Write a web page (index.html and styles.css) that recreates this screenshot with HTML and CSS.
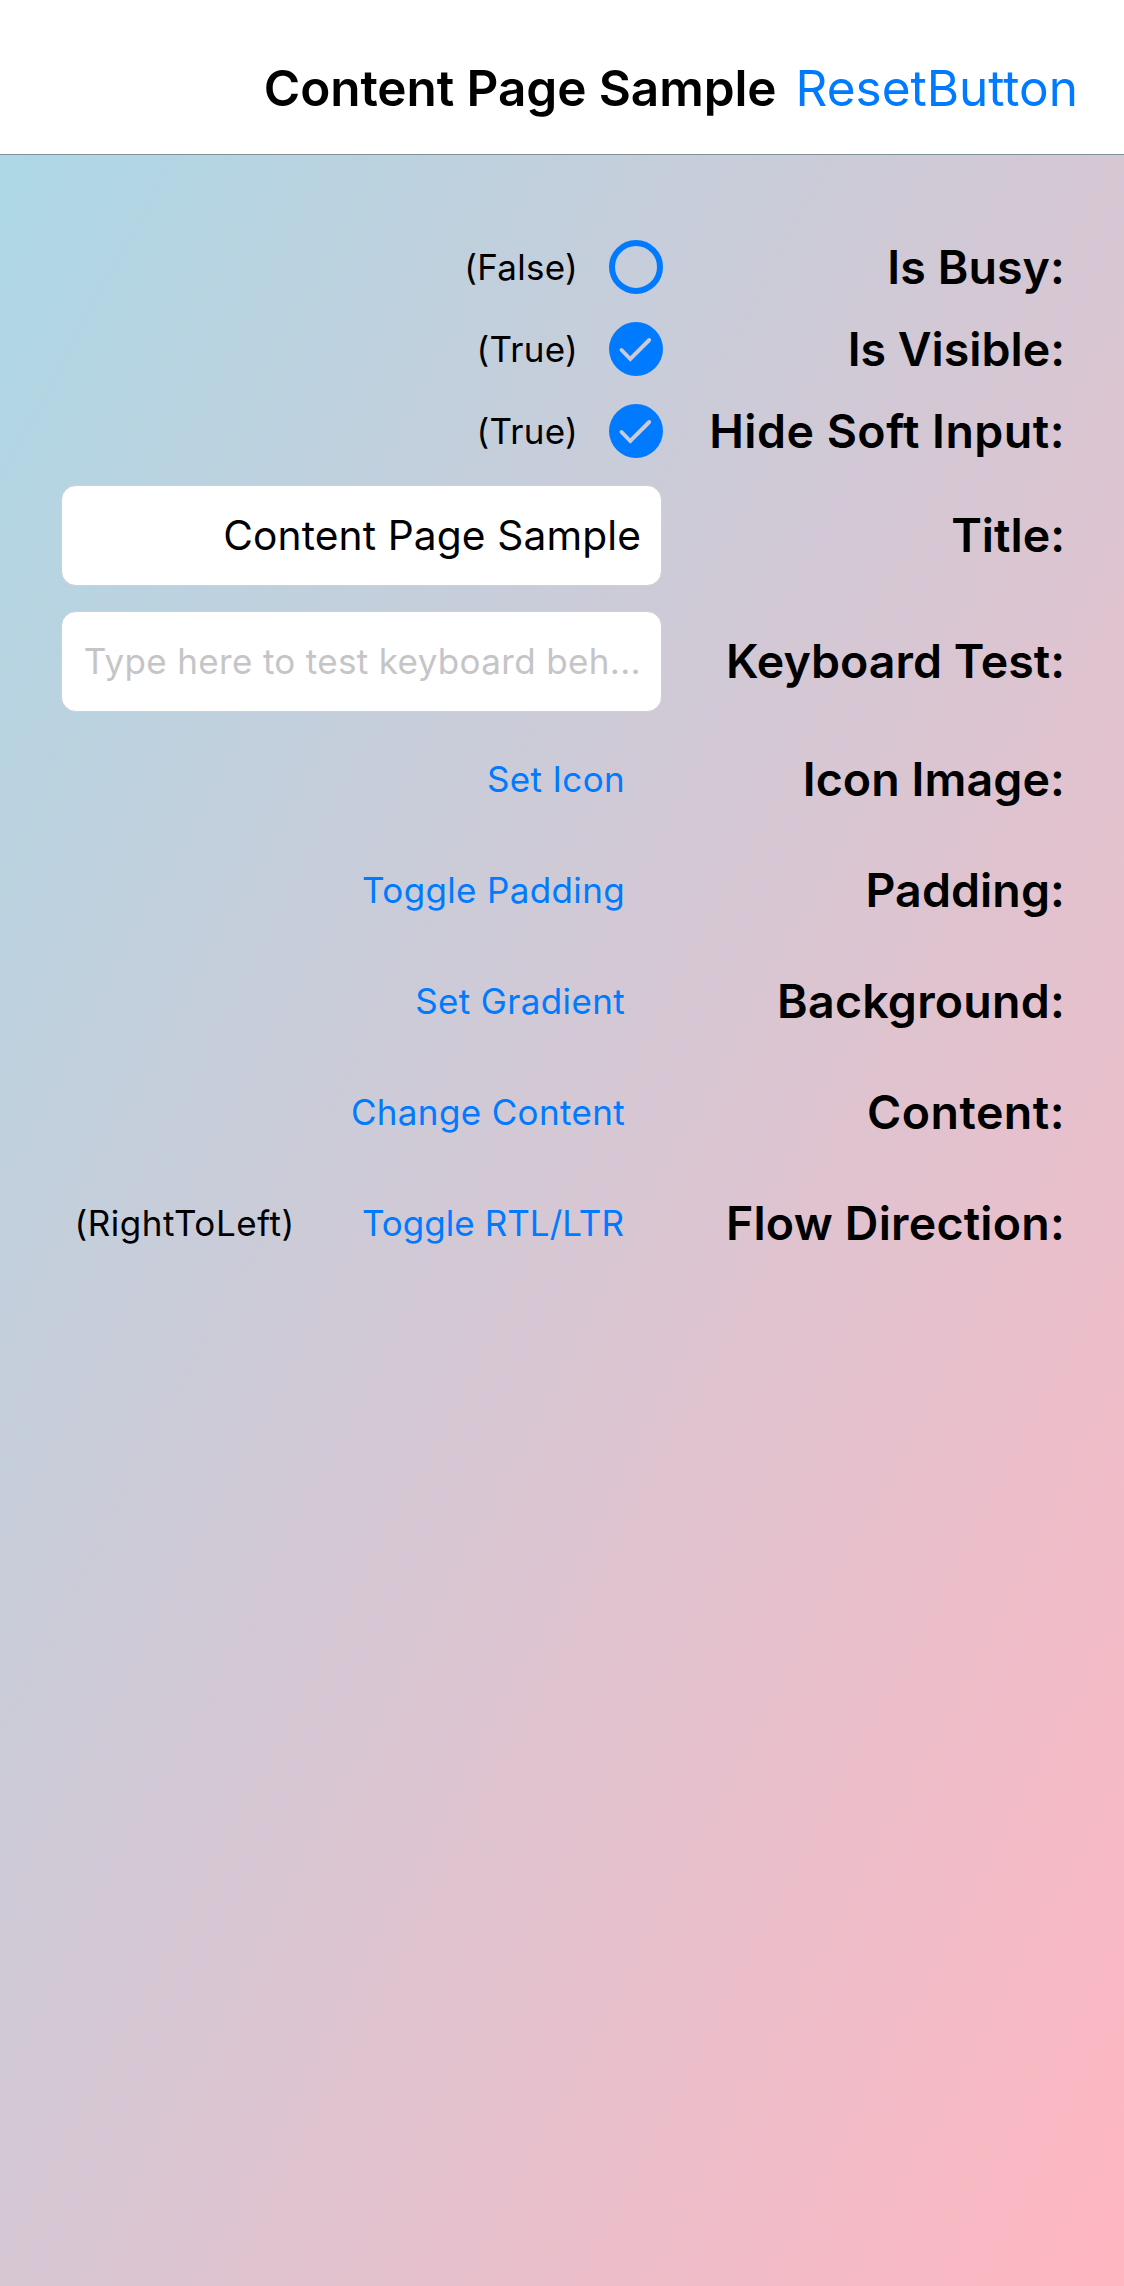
FILE: index.html
```
<!DOCTYPE html>
<html lang="en">
<head>
<meta charset="utf-8">
<title>Content Page Sample</title>
<link rel="stylesheet" href="styles.css">
</head>
<body>
<header class="navbar">
  <h1 class="navbar-title">Content Page Sample</h1>
  <a class="navbar-action">ResetButton</a>
</header>
<main class="page">
  <div class="row row-check">
    <div class="control"><span class="status">(False)</span>
      <svg class="check" viewBox="0 0 54 54"><circle cx="27" cy="27" r="24" fill="none" stroke="#007aff" stroke-width="6"/></svg></div>
    <span class="label">Is Busy:</span>
  </div>
  <div class="row row-check">
    <div class="control"><span class="status">(True)</span>
      <svg class="check" viewBox="0 0 54 54"><circle cx="27" cy="27" r="27" fill="#007aff"/><path d="M12.5 28 L21.3 37 L40.2 18" fill="none" stroke="#cacbd9" stroke-width="3.9" stroke-linecap="round" stroke-linejoin="miter"/></svg></div>
    <span class="label label-tight">Is Visible:</span>
  </div>
  <div class="row row-check">
    <div class="control"><span class="status">(True)</span>
      <svg class="check" viewBox="0 0 54 54"><circle cx="27" cy="27" r="27" fill="#007aff"/><path d="M12.5 28 L21.3 37 L40.2 18" fill="none" stroke="#cacbd9" stroke-width="3.9" stroke-linecap="round" stroke-linejoin="miter"/></svg></div>
    <span class="label label-wide">Hide Soft Input:</span>
  </div>
  <div class="row row-field">
    <div class="control field">Content Page Sample</div>
    <span class="label label-tight">Title:</span>
  </div>
  <div class="row row-field">
    <div class="control field placeholder">Type here to test keyboard beh...</div>
    <span class="label label-tight">Keyboard Test:</span>
  </div>
  <div class="row row-action">
    <div class="control actions"><a class="action">Set Icon</a></div>
    <span class="label">Icon Image:</span>
  </div>
  <div class="row row-action">
    <div class="control actions"><a class="action">Toggle Padding</a></div>
    <span class="label">Padding:</span>
  </div>
  <div class="row row-action">
    <div class="control actions"><a class="action">Set Gradient</a></div>
    <span class="label label-loose">Background:</span>
  </div>
  <div class="row row-action">
    <div class="control actions"><a class="action">Change Content</a></div>
    <span class="label label-wide">Content:</span>
  </div>
  <div class="row row-action">
    <div class="control actions"><span class="status status-wide">(RightToLeft)</span><a class="action action-tight">Toggle RTL/LTR</a></div>
    <span class="label label-loose">Flow Direction:</span>
  </div>
</main>
</body>
</html>
```
FILE: styles.css
```
* { box-sizing: border-box; }
body {
  margin: 0;
  min-height: 2286px;
  display: flex;
  flex-direction: column;
  font-family: Inter, "Liberation Sans", sans-serif;
  color: #000;
  white-space: nowrap;
}
.navbar {
  height: 155px;
  padding: 21px 46px 0 0;
  display: flex;
  align-items: center;
  justify-content: flex-end;
  gap: 19px;
  background: #fff;
  border-bottom: 1px solid #829499;
  font-size: 49.5px;
}
.navbar-title {
  margin: 0;
  font-size: inherit;
  font-weight: 600;
  letter-spacing: -0.08px;
}
.navbar-action { color: #007aff; }
.page {
  flex: 1;
  padding: 71px 59px 0 61px;
  background: linear-gradient(to bottom right, #add8e6, #ffb6c1);
}
.row {
  display: grid;
  grid-template-columns: 601px 1fr;
  align-items: center;
}
.row-check { height: 82px; }
.row-field { height: 126px; }
.row-action {
  height: 111px;
  padding-bottom: 2px;
}
.label {
  justify-self: end;
  font-size: 46.5px;
  font-weight: 600;
  letter-spacing: 0.09px;
}
.label-tight { letter-spacing: 0; }
.label-loose { letter-spacing: 0.22px; }
.label-wide { letter-spacing: 0.48px; }
.control {
  display: flex;
  align-items: center;
  justify-content: flex-end;
}
.status {
  font-size: 35px;
  letter-spacing: 0.25px;
}
.status-wide { letter-spacing: 0.56px; }
.check {
  width: 54px;
  height: 54px;
  margin: 0 -1px 0 31px;
}
.field {
  height: 101px;
  padding-right: 20px;
  border: 1px solid #d2cfd0;
  border-radius: 15px;
  background: #fff;
  font-size: 40.7px;
  letter-spacing: 0.11px;
}
.placeholder {
  font-size: 35px;
  letter-spacing: 0.34px;
  color: #c5c5c7;
}
.actions {
  padding-right: 37px;
  gap: 67px;
}
.action {
  font-size: 35px;
  letter-spacing: 0.35px;
  color: #007aff;
}
.action-tight {
  letter-spacing: 0.04px;
  padding-right: 1px;
}
```
